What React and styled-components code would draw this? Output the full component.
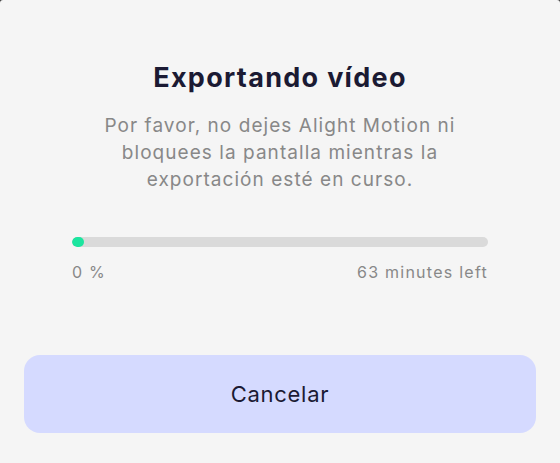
import React from "react";
import styled, { createGlobalStyle } from "styled-components";

const Global = createGlobalStyle`
  html, body { margin: 0; padding: 0; background: #3a3a3a; }
  body { font-family: Inter, "Noto Sans", sans-serif; }
`;

const Sheet = styled.div`
  width: 560px;
  height: 463px;
  box-sizing: border-box;
  background: #f5f5f5;
  border-radius: 3px 3px 0 0;
  display: flex;
  flex-direction: column;
  align-items: center;
  padding: 60px 24px 0;
`;

const Title = styled.h1`
  margin: 0;
  font-size: 27px;
  font-weight: 700;
  color: #1b1a33;
  line-height: 36px;
  letter-spacing: 1.3px;
`;

const Message = styled.p`
  margin: 16px 0 0;
  text-align: center;
  font-size: 19px;
  line-height: 27px;
  color: #888888;
  letter-spacing: 1.05px;
`;

const ProgressBlock = styled.div`
  width: 416px;
  margin-top: 44px;
  display: flex;
  flex-direction: column;
  gap: 15px;
`;

const Track = styled.div`
  height: 10px;
  border-radius: 5px;
  background: #dadada;
  overflow: hidden;
`;

const Fill = styled.div`
  height: 100%;
  border-radius: 5px;
  background: #1ce59f;
`;

const Labels = styled.div`
  display: flex;
  justify-content: space-between;
  font-size: 16px;
  line-height: 20px;
  color: #888888;
  letter-spacing: 1.25px;
`;

const CancelButton = styled.button`
  margin-top: 73px;
  width: 512px;
  height: 78px;
  border: none;
  border-radius: 16px;
  background: #d5daff;
  color: #1b1a33;
  font-family: inherit;
  font-size: 22px;
  letter-spacing: 0.7px;
  cursor: pointer;
`;

export default function App() {
  const progress = 0;
  return (
    <>
      <Global />
      <Sheet>
        <Title>Exportando vídeo</Title>
        <Message>
          Por favor, no dejes Alight Motion ni
          <br />
          bloquees la pantalla mientras la
          <br />
          exportación esté en curso.
        </Message>
        <ProgressBlock>
          <Track>
            <Fill style={{ width: `${Math.max(12, progress * 4.16)}px` }} />
          </Track>
          <Labels>
            <span>{progress} %</span>
            <span>63 minutes left</span>
          </Labels>
        </ProgressBlock>
        <CancelButton>Cancelar</CancelButton>
      </Sheet>
    </>
  );
}
